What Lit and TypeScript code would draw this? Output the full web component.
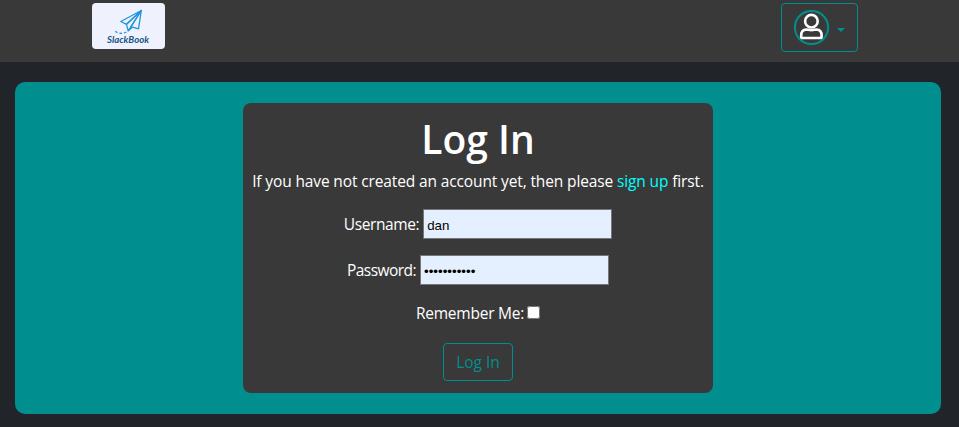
import { LitElement, html, css } from "lit";
import { customElement } from "lit/decorators.js";

@customElement("app-logo")
class AppLogo extends LitElement {
  static styles = css`
    :host { display: block; width: 73px; height: 46px; }
    svg { display: block; border-radius: 4px; background: #eff2fc; }
    .name { font: italic 700 9.5px "Lato", sans-serif; fill: #17548a; }
  `;
  render() {
    return html`<svg width="73" height="46" viewBox="0 0 73 46">
      <g fill="none" stroke="#1e96e0" stroke-width="1.3" stroke-linejoin="round">
        <path d="M49.3 7.5 28.8 18.5 34.5 21.3Z" />
        <path d="M49.3 7.5 34.5 21.3 36.2 27.8 39 23.6Z" />
        <path d="M49.3 7.5 39 23.6 46.5 25.8Z" />
        <path d="M36.2 27.8 40.5 24.2" />
        <path d="M23.3 28.3C26 30.8 31 31 35 28.7" stroke-dasharray="2.6 2" />
      </g>
      <text class="name" x="15" y="40" textLength="42" lengthAdjust="spacingAndGlyphs">SlackBook</text>
    </svg>`;
  }
}

@customElement("user-menu")
class UserMenu extends LitElement {
  static styles = css`
    :host { display: block; }
    .toggle {
      box-sizing: border-box; display: flex; align-items: center; width: 77px; height: 49px;
      padding: 0 12px; background: none; border: 1px solid #008e8e; border-radius: 4px;
    }
    .avatar { display: block; flex: none; }
    .caret { margin: 5px 0 0 7px; border: 4px solid transparent; border-top-color: #008e8e; border-bottom: 0; }
  `;
  render() {
    return html`<button class="toggle" aria-label="Account">
      <svg class="avatar" width="36" height="36" viewBox="0 0 36 36" fill="none">
        <circle cx="17.5" cy="17.5" r="16.6" stroke="#008e8e" stroke-width="2" />
        <circle cx="17.4" cy="11.2" r="6.3" stroke="#fff" stroke-width="2.6" />
        <path d="M12.3 19.5C9 19.7 7.2 22.2 7.2 25.5V26.7Q7.2 28 8.7 28H26.1Q27.6 28 27.6 26.7V25.5C27.6 22.2 25.8 19.7 22.5 19.5C20.8 19.5 20 20.2 17.4 20.2S14 19.5 12.3 19.5Z" stroke="#fff" stroke-width="2.6" />
      </svg>
      <span class="caret"></span>
    </button>`;
  }
}

@customElement("login-form")
class LoginForm extends LitElement {
  static styles = css`
    :host {
      box-sizing: border-box; display: flex; flex-direction: column; align-items: center;
      width: 470px; height: 290px; padding-top: 12px; border-radius: 8px;
      background: #393939; color: #fff; font: 15.5px/24px "Open Sans", "Noto Sans", sans-serif;
      letter-spacing: -0.13px; white-space: nowrap;
    }
    h1 { margin: 0; font-size: 39px; line-height: 48px; font-weight: 600; letter-spacing: 0; }
    p { margin: 6px 0 0; }
    a { color: #00ffff; text-decoration: none; }
    label { letter-spacing: -0.4px; }
    .row { display: flex; align-items: center; justify-content: center; gap: 4px; height: 30px; margin-top: 16px; }
    .password label { letter-spacing: -0.55px; }
    .field {
      box-sizing: border-box; width: 189px; height: 30px; padding: 2px 3px 0; margin: 0;
      border: 1px solid #767676; border-radius: 0; outline: none;
      background: #e4f0ff; color: #000; font: 13.333px "Liberation Sans", sans-serif;
    }
    .remember { gap: 3px; height: 24px; }
    .remember label { letter-spacing: -0.23px; }
    .check { width: 13px; height: 13px; margin: 0 0 2px; }
    .submit {
      box-sizing: border-box; width: 70px; height: 38px; margin-top: 18px; padding: 0;
      border: 1px solid #008e8e; border-radius: 4px; background: none; color: #008e8e; font: inherit;
    }
  `;
  render() {
    return html`
      <h1>Log In</h1>
      <p>If you have not created an account yet, then please <a href="#">sign up</a> first.</p>
      <div class="row"><label for="user">Username:</label><input class="field" id="user" value="dan" /></div>
      <div class="row password"><label for="pass">Password:</label><input class="field" id="pass" type="password" value="slackbook12" /></div>
      <div class="row remember"><label for="keep">Remember Me:</label><input class="check" id="keep" type="checkbox" /></div>
      <button class="submit">Log In</button>`;
  }
}

@customElement("app-root")
class AppRoot extends LitElement {
  static styles = css`
    :host { display: block; height: 427px; overflow: hidden; background: #212529; }
    nav {
      box-sizing: border-box; display: flex; justify-content: space-between; align-items: flex-start;
      height: 62px; padding: 3px 101px 0 92px; background: #393939;
    }
    main {
      box-sizing: border-box; display: flex; justify-content: center; align-items: flex-start;
      height: 332px; margin: 20px 18px 0 15px; padding-top: 21px; border-radius: 10px; background: #008e8e;
    }
  `;
  render() {
    return html`<nav><app-logo></app-logo><user-menu></user-menu></nav>
      <main><login-form></login-form></main>`;
  }
}
